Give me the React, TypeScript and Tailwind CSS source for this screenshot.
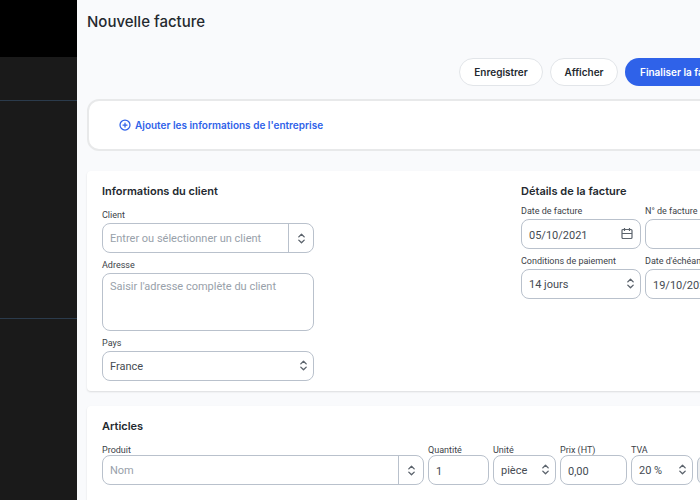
import React from 'react';
import { ChevronsUpDown, CirclePlus } from 'lucide-react';

const control =
  'block w-full h-[30px] rounded-lg border border-[#b9c1cc] bg-white px-[7px] pt-0.5 text-[11px] text-[#454b52] placeholder-[#98a1aa] outline-none focus:border-[#2f62e9]';

const heading = "font-['Inter',sans-serif] text-[11px] leading-[18px] font-semibold";

interface FieldProps {
  id: string;
  label: string;
  tight?: boolean;
  children: React.ReactNode;
}

const Field: React.FC<FieldProps> = ({ id, label, tight, children }) => (
  <div className="min-w-0">
    <label
      htmlFor={id}
      className={`block whitespace-nowrap text-[9px] leading-[14px] text-[#3c4248] ${tight ? 'h-3' : 'h-[15px]'}`}
    >
      {label}
    </label>
    {children}
  </div>
);

interface SelectProps {
  id: string;
  options: string[];
}

const Select: React.FC<SelectProps> = ({ id, options }) => (
  <div className="relative">
    <select id={id} className={`${control} appearance-none`}>
      {options.map((option) => (
        <option key={option}>{option}</option>
      ))}
    </select>
    <ChevronsUpDown
      size={13}
      strokeWidth={2.5}
      className="pointer-events-none absolute right-1 top-2 text-[#5b636c]"
    />
  </div>
);

const Combobox: React.FC<{ id: string; placeholder: string }> = ({ id, placeholder }) => (
  <div className="flex h-[30px] overflow-hidden rounded-lg border border-[#b9c1cc] bg-white">
    <input
      id={id}
      placeholder={placeholder}
      className="min-w-0 flex-1 px-[7px] pt-0.5 text-[11px] text-[#454b52] placeholder-[#98a1aa] outline-none"
    />
    <button
      type="button"
      aria-label="Ouvrir la liste"
      className="flex w-[25px] items-center justify-center border-l border-[#b9c1cc] text-[#5b636c]"
    >
      <ChevronsUpDown size={13} strokeWidth={2.5} />
    </button>
  </div>
);

const CalendarIcon = () => (
  <svg
    width="12"
    height="12"
    viewBox="0 0 12 12"
    fill="none"
    stroke="currentColor"
    strokeWidth="1.2"
    className="pointer-events-none absolute right-2 top-[9px] text-[#5b636c]"
  >
    <rect x="1" y="1.5" width="10" height="9" rx="1" />
    <path d="M1 5.5h10M3.5 0v3M8.5 0v3" />
  </svg>
);

const DateInput: React.FC<{ id: string; value: string }> = ({ id, value }) => (
  <div className="relative">
    <input id={id} defaultValue={value} className={control} />
    <CalendarIcon />
  </div>
);

const App: React.FC = () => {
  return (
    <div className="flex min-h-screen overflow-hidden bg-[#f9fafc] font-['Roboto',sans-serif] text-[#24292f]">
      <aside className="flex w-[77px] shrink-0 flex-col bg-[#1a1a1a]">
        <div className="h-[57px] bg-black" />
        <div className="h-11 border-b border-[#2b3b4c]" />
        <div className="h-[218px] border-b border-[#2b3b4c]" />
      </aside>
      <main className="min-w-0 flex-1 overflow-hidden">
        <div className="min-w-[713px] px-[10px]">
          <h1 className="pt-2.5 font-['Inter',sans-serif] text-[15px] leading-6 font-medium">Nouvelle facture</h1>

          <div className="mt-6 flex justify-end gap-[7px] pr-[27px] font-['Inter',sans-serif] text-[10px] font-semibold">
            <button className="h-7 w-[84px] rounded-full border border-[#e2e5e9] bg-white">Enregistrer</button>
            <button className="h-7 w-[68px] rounded-full border border-[#e2e5e9] bg-white">Afficher</button>
            <button className="h-7 w-32 rounded-full bg-[#2f62e9] px-[15px] text-left whitespace-nowrap text-white">
              Finaliser la facture
            </button>
          </div>

          <section className="mt-[13px] flex h-[52px] items-center rounded-xl border-2 border-[#e8e9ea] bg-white px-[30px]">
            <button className="flex items-center gap-1 font-['Inter',sans-serif] text-[10px] font-semibold text-[#2f62e9]">
              <CirclePlus size={12} strokeWidth={2.5} />
              Ajouter les informations de l'entreprise
            </button>
          </section>

          <form>
            <section className="mt-5 flex h-[220px] justify-between rounded-sm bg-white px-[15px] pt-[11px] shadow-[0_1px_2px_rgba(0,0,0,0.12)]">
              <div className="w-[212px]">
                <h2 className={`mb-2 ${heading}`}>Informations du client</h2>
                <div className="space-y-[5px]">
                  <Field id="client" label="Client">
                    <Combobox id="client" placeholder="Entrer ou sélectionner un client" />
                  </Field>
                  <Field id="adresse" label="Adresse">
                    <textarea
                      id="adresse"
                      placeholder="Saisir l'adresse complète du client"
                      className="block h-[58px] w-full resize-none rounded-lg border border-[#b9c1cc] px-[7px] py-1 text-[11px] leading-[18px] placeholder-[#98a1aa] outline-none"
                    />
                  </Field>
                  <Field id="pays" label="Pays">
                    <Select id="pays" options={['France', 'Belgique', 'Suisse']} />
                  </Field>
                </div>
              </div>
              <div className="w-[244px]">
                <h2 className={`mb-1 ${heading}`}>Détails de la facture</h2>
                <div className="grid grid-cols-2 gap-x-1 gap-y-[5px]">
                  <Field id="date" label="Date de facture">
                    <DateInput id="date" value="05/10/2021" />
                  </Field>
                  <Field id="numero" label="N° de facture">
                    <input id="numero" className={control} />
                  </Field>
                  <Field id="conditions" label="Conditions de paiement">
                    <Select id="conditions" options={['14 jours', '30 jours', '60 jours']} />
                  </Field>
                  <Field id="echeance" label="Date d'échéance">
                    <DateInput id="echeance" value="19/10/2021" />
                  </Field>
                </div>
              </div>
            </section>

            <section className="mt-[15px] rounded-sm bg-white px-[15px] pt-[11px] pb-8 shadow-[0_1px_2px_rgba(0,0,0,0.12)]">
              <h2 className={`mb-2 ${heading}`}>Articles</h2>
              <div className="grid grid-cols-[322px_61px_63px_67px_62px_1fr] items-end gap-1">
                <Field id="produit" label="Produit" tight>
                  <Combobox id="produit" placeholder="Nom" />
                </Field>
                <Field id="quantite" label="Quantité" tight>
                  <input id="quantite" defaultValue="1" className={control} />
                </Field>
                <Field id="unite" label="Unité" tight>
                  <Select id="unite" options={['pièce', 'heure', 'jour']} />
                </Field>
                <Field id="prix" label="Prix (HT)" tight>
                  <input id="prix" defaultValue="0,00" className={control} />
                </Field>
                <Field id="tva" label="TVA" tight>
                  <Select id="tva" options={['20 %', '10 %', '5,5 %', '0 %']} />
                </Field>
                <input
                  aria-label="Montant"
                  disabled
                  className="h-[30px] w-full min-w-0 rounded-lg border border-[#b9c1cc] bg-[#eceef0]"
                />
              </div>
            </section>
          </form>
        </div>
      </main>
    </div>
  );
};

export default App;
